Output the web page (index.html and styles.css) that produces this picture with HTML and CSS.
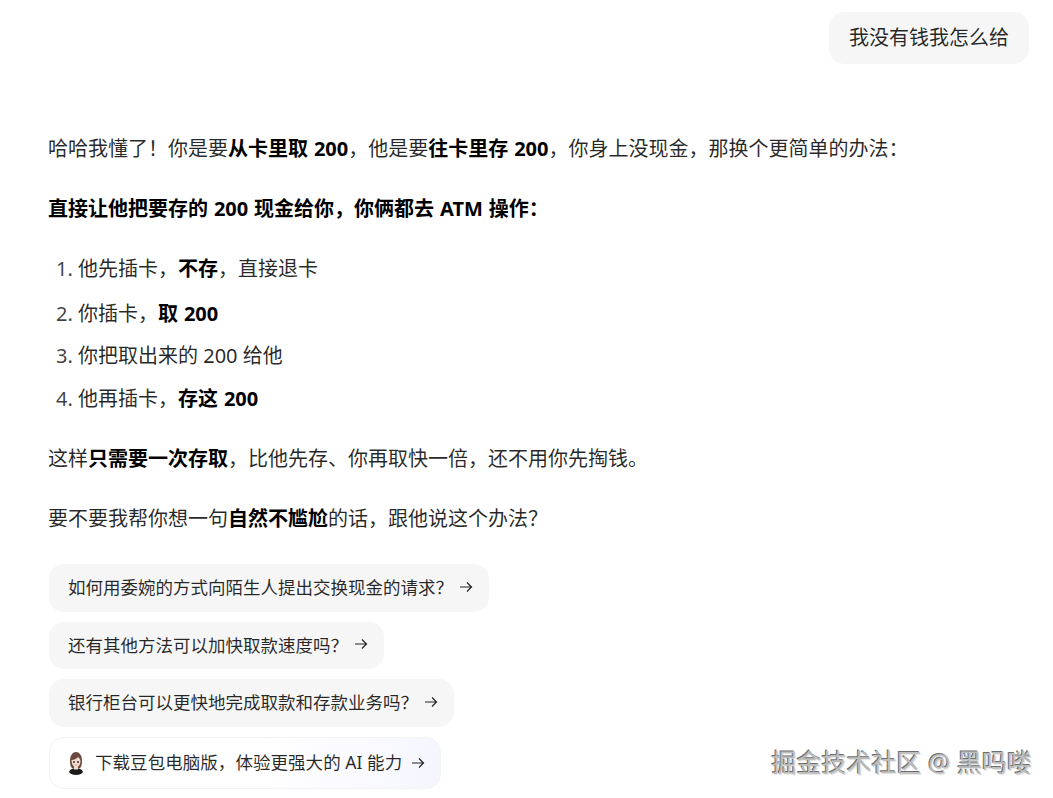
FILE: index.html
```html
<!DOCTYPE html>
<html lang="zh-CN">
<head>
<meta charset="utf-8">
<title>对话</title>
<link rel="stylesheet" href="styles.css">
</head>
<body>
<main class="chat">
  <div class="user-row"><div class="bubble">我没有钱我怎么给</div></div>
  <article class="answer">
    <p>哈哈我懂了！你是要<b>从卡里取 200</b>，他是要<b>往卡里存 200</b>，你身上没现金，那换个更简单的办法：</p>
    <p><b>直接让他把要存的 200 现金给你，你俩都去 ATM 操作：</b></p>
    <ol>
      <li class="first">他先插卡，<b>不存</b>，直接退卡</li>
      <li class="second">你插卡，<b>取 200</b></li>
      <li class="third">你把取出来的 200 给他</li>
      <li class="fourth">他再插卡，<b>存这 200</b></li>
    </ol>
    <p>这样<b>只需要一次存取</b>，比他先存、你再取快一倍，还不用你先掏钱。</p>
    <p>要不要我帮你想一句<b>自然不尴尬</b>的话，跟他说这个办法？</p>
  </article>
  <div class="chips">
    <a class="chip">如何用委婉的方式向陌生人提出交换现金的请求？<svg class="arrow" viewBox="0 0 14 14"><path d="M1 7h11.5M8 2.500 12.500 7 8 11.500"/></svg></a>
    <a class="chip">还有其他方法可以加快取款速度吗？<svg class="arrow" viewBox="0 0 14 14"><path d="M1 7h11.5M8 2.500 12.500 7 8 11.500"/></svg></a>
    <a class="chip">银行柜台可以更快地完成取款和存款业务吗？<svg class="arrow" viewBox="0 0 14 14"><path d="M1 7h11.5M8 2.500 12.500 7 8 11.500"/></svg></a>
    <a class="chip promo">
      <svg class="avatar" viewBox="0 0 16 24">
        <path d="M1 21c1-3 4-4 7-4s6 1 7 4c-1 2-4 3-7 3s-6-1-7-3z" fill="#1d1a1c"/>
        <path d="M2 10C2 4 5 1 8 1s6 3 6 9c0 4-1 6-2 7H4c-1-1-2-3-2-7z" fill="#6a483d"/>
        <path d="M3.500 9c2.500 0 5-1 6.500-3 1 1 2.500 2 2.500 4 0 4-2.500 6.500-4.500 6.500S3.500 14 3.500 9z" fill="#f6dcd0"/>
        <path d="M6 16h4v2.500H6z" fill="#f6dcd0"/>
        <circle cx="6" cy="11" r=".9" fill="#2a2020"/>
        <circle cx="10" cy="11" r=".9" fill="#2a2020"/>
        <path d="M7 14h2" stroke="#d27f7a" stroke-width=".7"/>
      </svg>
      <span class="promo-text">下载豆包电脑版，体验更强大的 AI 能力</span><svg class="arrow" viewBox="0 0 14 14"><path d="M1 7h11.5M8 2.500 12.500 7 8 11.500"/></svg></a>
  </div>
</main>
<div class="watermark">掘金技术社区 @ 黑吗喽</div>
</body>
</html>
```
FILE: styles.css
```css
html, body { margin: 0; padding: 0; background: #fff; }
body {
  width: 1053px; height: 798px; overflow: hidden; position: relative;
  font-family: "Noto Sans", "Noto Sans CJK SC", sans-serif;
  font-size: 20px; color: rgba(0,0,0,.85);
}
.chat { padding: 12px 24px 0 48px; }
.user-row { display: flex; justify-content: flex-end; }
.bubble {
  background: #f6f6f6; border-radius: 15px; padding: 11px 20px; line-height: 30px;
}
.answer { margin-top: 70px; }
.answer p { margin: 0 0 30px; line-height: 30px; white-space: nowrap; }
.answer b { color: #000; font-weight: 700; word-spacing: .7px; }
ol { margin: 0 0 30px; padding: 0 0 0 30px; }
li { line-height: 30px; }
li::marker { color: rgba(0,0,0,.75); }
.first { margin-bottom: 15px; }
.second { margin-bottom: 12px; }
.third { margin-bottom: 13px; }
.chips { display: flex; flex-direction: column; align-items: flex-start; gap: 10px; margin-left: 1px; }
.chip {
  display: flex; align-items: center; height: 47.5px; box-sizing: border-box;
  padding: 0 16px 2px 19px; background: #f6f6f6; border-radius: 15px;
  font-size: 17.5px; white-space: nowrap; color: rgba(0,0,0,.85);
}
.arrow {
  width: 14px; height: 14px; margin-left: 6px; flex: none;
  fill: none; stroke: #222; stroke-width: 1.2;
}
.promo {
  height: 52px; padding: 0 15px 0 18px; border: 1px solid #f3f3f6;
  background: linear-gradient(100deg, #fff 55%, #f5f5ff 100%);
}
.avatar { width: 16px; height: 24px; margin-right: 11px; flex: none; }
.promo .arrow { margin-left: 9px; }
.promo-text { letter-spacing: .05px; padding-bottom: 2px; }
.watermark {
  position: absolute; right: 21px; bottom: 20px;
  font-size: 25px; line-height: 32px; color: #bdbdbd; white-space: nowrap;
  text-shadow: -1px -1px 0 #6e6e6e, 1px 1px 0 #e4e4e4;
}
```
